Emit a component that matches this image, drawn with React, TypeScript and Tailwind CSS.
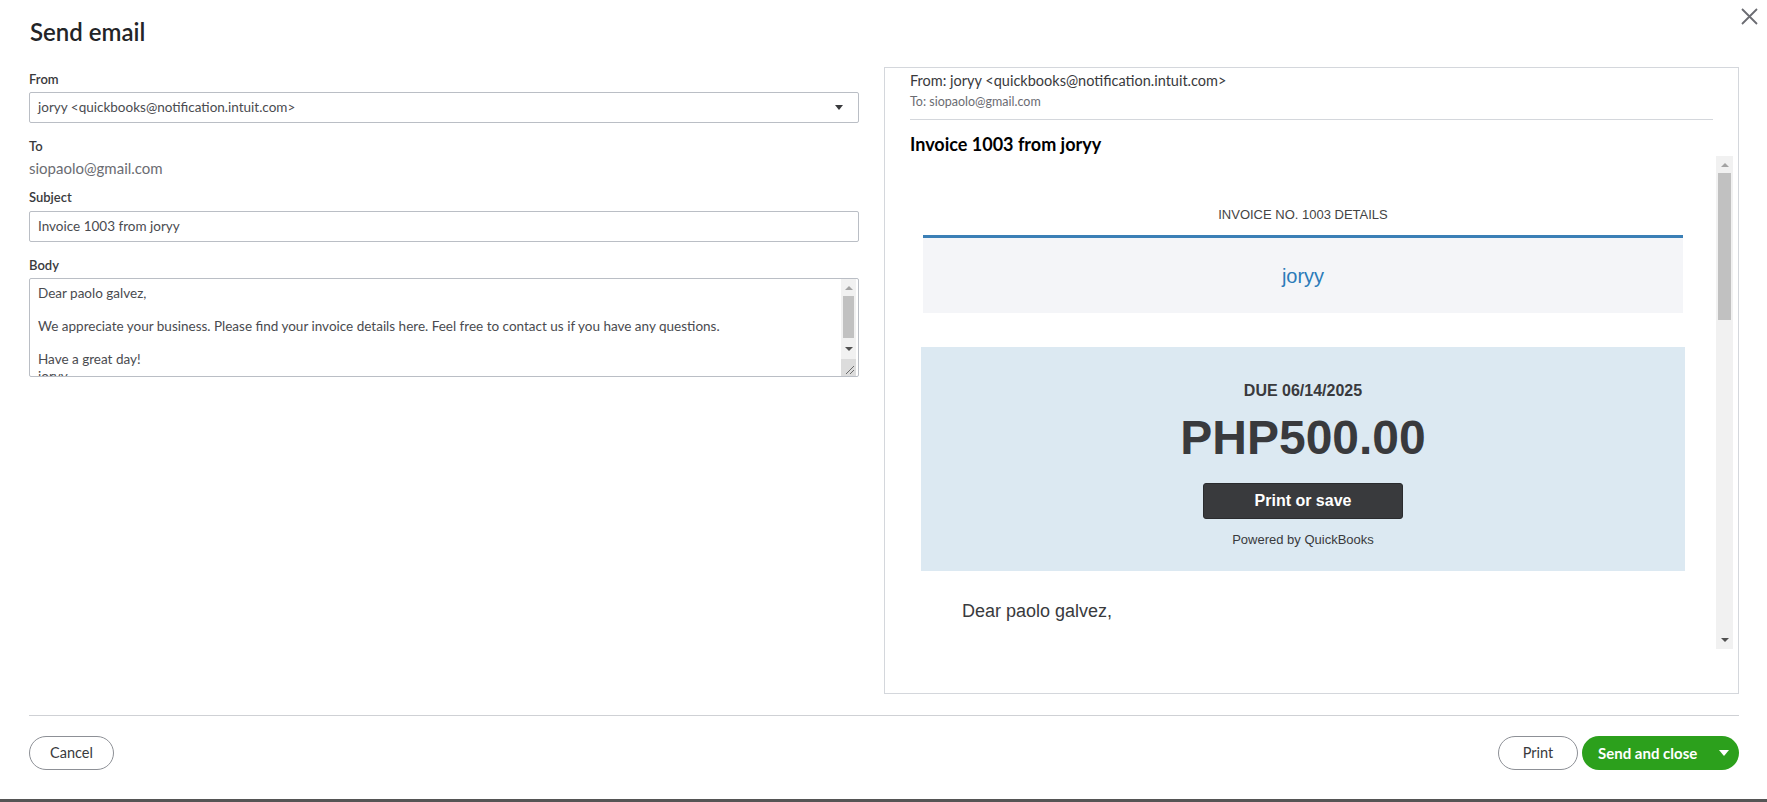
import React from 'react';

const appFont = "font-['Lato','Noto_Sans',sans-serif]";
const mailFont = "font-['Liberation_Sans',Arial,sans-serif]";

const Label: React.FC<{ text: string; className?: string }> = ({ text, className }) => (
  <div className={`text-[13px] leading-[16px] font-semibold text-[#393a3d] ${className ?? ''}`}>{text}</div>
);

// fake classic scrollbar, drawn so it looks the same in every browser
const ScrollBar: React.FC<{ thumbTop: number; thumbHeight: number; width: string; corner?: boolean }> = ({ thumbTop, thumbHeight, width, corner }) => (
  <div className={`relative h-full shrink-0 bg-[#f1f1f1] ${width}`}>
    <div className="absolute left-1/2 top-[7px] h-0 w-0 -translate-x-1/2 border-x-[4px] border-b-[4px] border-x-transparent border-b-[#a3a3a3]" />
    <div className="absolute left-[2px] right-[2px] bg-[#c1c1c1]" style={{ top: thumbTop, height: thumbHeight }} />
    <div
      className={`absolute left-1/2 h-0 w-0 -translate-x-1/2 border-x-[4px] border-t-[4px] border-x-transparent border-t-[#505050] ${corner ? 'bottom-[25px]' : 'bottom-[7px]'}`}
    />
    {corner && (
      <div className="absolute bottom-0 left-0 right-0 h-[17px] bg-[#dcdcdc]">
        <svg className="absolute bottom-[2px] right-[2px]" width="9" height="9" viewBox="0 0 9 9">
          <path d="M1 9 L9 1 M5 9 L9 5" stroke="#6b6b6b" strokeWidth="1" />
        </svg>
      </div>
    )}
  </div>
);

const EmailForm: React.FC = () => (
  <div className="w-[830px] shrink-0 pt-[4px]">
    <Label text="From" />
    <div className="mt-[5px] flex h-[31px] items-center justify-between rounded-[2px] border border-[#babec5] pl-[8px] pr-[15px] text-[13.5px] text-[#4a4b4f]">
      <span>joryy &lt;quickbooks@notification.intuit.com&gt;</span>
      <span className="h-0 w-0 border-x-[4px] border-t-[5px] border-x-transparent border-t-[#393a3d]" />
    </div>
    <Label text="To" className="mt-[15px]" />
    <div className="mt-[4px] text-[15px] leading-[20px] text-[#6b6c72]">siopaolo@gmail.com</div>
    <Label text="Subject" className="mt-[11px]" />
    <div className="mt-[6px] flex h-[31px] items-center rounded-[2px] border border-[#babec5] pl-[8px] text-[13.5px] text-[#4a4b4f]">
      Invoice 1003 from joryy
    </div>
    <Label text="Body" className="mt-[15px]" />
    <div className="mt-[5px] flex h-[99px] overflow-hidden rounded-[2px] border border-[#babec5] pr-[2px]">
      <div className="flex-1 overflow-hidden whitespace-pre-line pl-[8px] pt-[6px] text-[13.5px] leading-[16.5px] text-[#4a4b4f]">
        {'Dear paolo galvez,\n\nWe appreciate your business. Please find your invoice details here. Feel free to contact us if you have any questions.\n\nHave a great day!\njoryy'}
      </div>
      <ScrollBar thumbTop={17} thumbHeight={42} width="w-[15px]" corner />
    </div>
  </div>
);

const InvoicePreview: React.FC = () => (
  <div className="flex h-full flex-1 flex-col border border-[#d4d7dc]">
    <div className="px-[25px] pt-[4px]">
      <div className="text-[14.5px] leading-[18px] text-[#393a3d]">From: joryy &lt;quickbooks@notification.intuit.com&gt;</div>
      <div className="mt-[4px] text-[12.5px] leading-[16px] text-[#6b6c72]">To: siopaolo@gmail.com</div>
      <div className="mt-[9px] h-px bg-[#d4d7dc]" />
      <div className="mt-[13px] text-[18px] leading-[23px] font-bold text-[#000]">Invoice 1003 from joryy</div>
    </div>
    <div className="mx-[5px] flex h-[493px]">
      <div className={`flex-1 overflow-hidden ${mailFont}`}>
        <div className="mx-auto w-[764px]">
          <div className="pt-[51px] text-center text-[13px] leading-[16px] text-[#444]">INVOICE NO. 1003 DETAILS</div>
          <div className="mx-auto mt-[12px] flex h-[78px] w-[760px] items-center justify-center border-t-[3px] border-[#3b7fb6] bg-[#f4f5f8] text-[20px] text-[#2b7bb9]">
            joryy
          </div>
          <div className="mt-[34px] flex h-[224px] flex-col items-center bg-[#dce9f2] text-[#393a3d]">
            <div className="mt-[34px] text-[16px] leading-[20px] font-bold">DUE 06/14/2025</div>
            <div className="mt-[9px] text-[48px] leading-[56px] font-bold">PHP500.00</div>
            <div className="mt-[17px] flex h-[36px] w-[200px] items-center justify-center rounded-[3px] border border-[#2a2b2e] bg-[#393a3d] text-[16px] font-bold text-white">
              Print or save
            </div>
            <div className="mt-[13px] text-[13px] leading-[16px]">Powered by QuickBooks</div>
          </div>
          <div className="mt-[29px] pl-[41px] text-[18px] leading-[22px] text-[#393a3d]">Dear paolo galvez,</div>
        </div>
      </div>
      <ScrollBar thumbTop={17} thumbHeight={147} width="w-[17px]" />
    </div>
  </div>
);

export default function App() {
  return (
    <div className={`relative h-[802px] w-full overflow-hidden border-b-[3px] border-[#555] bg-white text-[#393a3d] ${appFont}`}>
      <div className="h-[67px] pl-[30px] pt-[17px]">
        <h1 className="text-[24px] leading-[30px] font-semibold text-[#232427]">Send email</h1>
      </div>
      <button className="absolute right-[9px] top-[8px]" aria-label="Close">
        <svg width="17" height="17" viewBox="0 0 17 17">
          <path d="M1 1 L16 16 M16 1 L1 16" stroke="#6b6c72" strokeWidth="1.8" />
        </svg>
      </button>

      <div className="flex h-[627px] gap-[25px] pl-[29px] pr-[28px]">
        <EmailForm />
        <InvoicePreview />
      </div>

      <div className="ml-[29px] mr-[28px] mt-[21px] h-px bg-[#cfd1d5]" />

      <div className="flex items-center justify-between pl-[29px] pr-[28px] pt-[20px]">
        <button className="h-[34px] w-[85px] rounded-full border border-[#8d9096] text-[14.5px] text-[#393a3d]">Cancel</button>
        <div className="flex gap-[4px]">
          <button className="h-[34px] w-[80px] rounded-full border border-[#8d9096] text-[14.5px] text-[#393a3d]">Print</button>
          <button className="flex h-[34px] w-[157px] items-center justify-between rounded-full bg-[#2ca01c] pl-[16px] pr-[10px] text-[15px] font-bold text-white">
            <span>Send and close</span>
            <span className="h-0 w-0 border-x-[5px] border-t-[6px] border-x-transparent border-t-white" />
          </button>
        </div>
      </div>
    </div>
  );
}
